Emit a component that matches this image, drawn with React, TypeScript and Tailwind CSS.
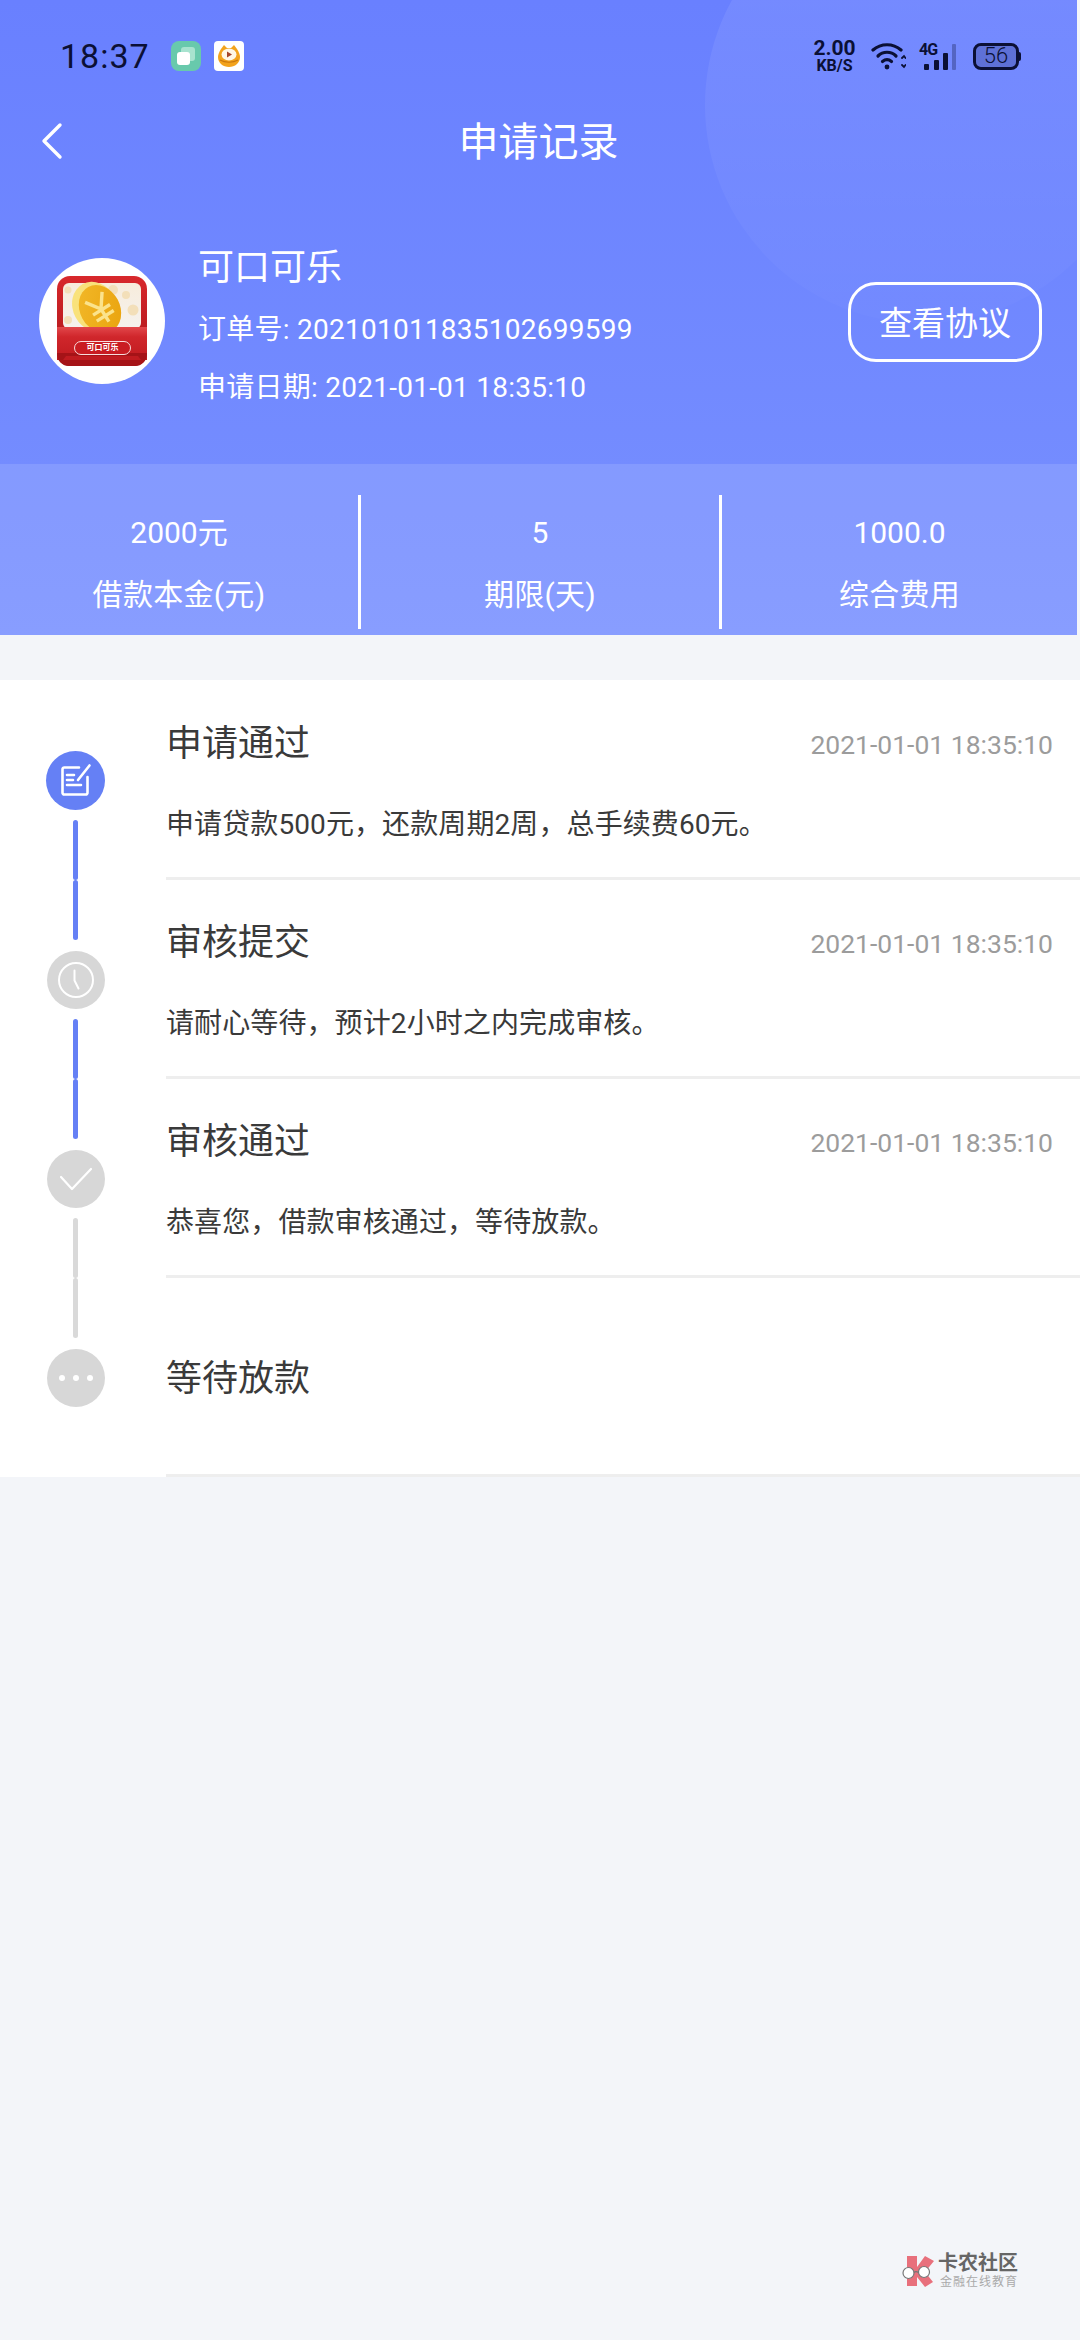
import React from "react";

const orderNumber = "202101011835102699599";

const rows = [
  { title: "申请通过", time: "2021-01-01 18:35:10", desc: "申请贷款500元，还款周期2周，总手续费60元。" },
  { title: "审核提交", time: "2021-01-01 18:35:10", desc: "请耐心等待，预计2小时之内完成审核。" },
  { title: "审核通过", time: "2021-01-01 18:35:10", desc: "恭喜您，借款审核通过，等待放款。" },
  { title: "等待放款", time: "", desc: "" },
];

function StepIcon({ index }: { index: number }) {
  if (index === 0)
    return (
      <div className="flex h-[59px] w-[59px] items-center justify-center rounded-full bg-[#6580f5]">
        <svg width="34" height="34" viewBox="0 0 34 34" fill="none" stroke="#fff" strokeWidth="2.6" strokeLinecap="round" strokeLinejoin="round">
          <path d="M20 4.500H5.500A1.800 1.800 0 0 0 3.500 6.500v23a1.800 1.800 0 0 0 2 2h21a1.800 1.800 0 0 0 2-2V14" />
          <path d="M19 17 30.500 2.500" />
          <path d="M8 12h7M8 17h6M8 22h14" />
        </svg>
      </div>
    );
  if (index === 1)
    return (
      <div className="flex h-[58px] w-[58px] items-center justify-center rounded-full bg-[#d7d7d7]">
        <svg width="38" height="38" viewBox="0 0 38 38" fill="none" stroke="#fff" strokeWidth="2" strokeLinecap="round" strokeLinejoin="round">
          <circle cx="19" cy="19" r="17" />
          <path d="M17.500 9.500v10l4 8" />
        </svg>
      </div>
    );
  if (index === 2)
    return (
      <div className="flex h-[58px] w-[58px] items-center justify-center rounded-full bg-[#d7d7d7]">
        <svg width="34" height="26" viewBox="0 0 34 26" fill="none" stroke="#fff" strokeWidth="2.2" strokeLinecap="round" strokeLinejoin="round">
          <path d="M2 11 13 23 32 3" />
        </svg>
      </div>
    );
  return (
    <div className="flex h-[58px] w-[58px] items-center justify-center gap-[8px] rounded-full bg-[#d7d7d7]">
      <span className="h-[6px] w-[6px] rounded-full bg-white" />
      <span className="h-[6px] w-[6px] rounded-full bg-white" />
      <span className="h-[6px] w-[6px] rounded-full bg-white" />
    </div>
  );
}

function Segment({ color }: { color: string }) {
  return <div className={`h-[60px] w-[5px] shrink-0 rounded-full ${color}`} />;
}

function AppIcon() {
  return (
    <div className="relative h-[90px] w-[90px]">
      <svg width="90" height="90" viewBox="0 0 90 90">
        <defs>
          <linearGradient id="redg" x1="0" y1="0" x2="0" y2="1">
            <stop offset="0" stopColor="#d8282c" />
            <stop offset="1" stopColor="#a81418" />
          </linearGradient>
          <linearGradient id="pocket" x1="0" y1="0" x2="0" y2="1">
            <stop offset="0" stopColor="#e2474b" />
            <stop offset="0.3" stopColor="#d0262b" />
            <stop offset="1" stopColor="#c01b20" />
          </linearGradient>
          <linearGradient id="coin" x1="0" y1="0" x2="1" y2="1">
            <stop offset="0" stopColor="#f2b92a" />
            <stop offset="1" stopColor="#e9a20c" />
          </linearGradient>
          <linearGradient id="panel" x1="0" y1="0" x2="0" y2="1">
            <stop offset="0" stopColor="#f7ecdc" />
            <stop offset="1" stopColor="#f5f2ee" />
          </linearGradient>
        </defs>
        <rect x="0" y="0" width="90" height="90" rx="13" fill="url(#redg)" />
        <rect x="6" y="7" width="78" height="46" rx="6" fill="url(#panel)" />
        <circle cx="56" cy="14" r="5" fill="#f3dfb9" />
        <circle cx="76" cy="34" r="5.500" fill="#f3dfb9" />
        <circle cx="11" cy="44" r="4" fill="#f3dfb9" />
        <circle cx="69" cy="19" r="4" fill="#f3dfb9" />
        <circle cx="11" cy="14" r="3.500" fill="#f3dfb9" />
        <ellipse cx="38" cy="31" rx="22" ry="26" fill="#f9e27b" transform="rotate(-28 38 31)" />
        <ellipse cx="43" cy="33" rx="20" ry="25" fill="url(#coin)" transform="rotate(-28 43 33)" />
        <g transform="translate(44 33) rotate(-32)" fill="none" stroke="#fbe38c" strokeWidth="3.400">
          <path d="M-10 -14 0 0 10 -14M0 0v15M-10 1h20M-10 8h20" />
        </g>
        <rect x="0" y="51" width="90" height="33" fill="url(#pocket)" />
        <path d="M0 78v-1h90v1a12 12 0 0 1-12 12H12A12 12 0 0 1 0 78Z" fill="#a51317" />
        <path d="M6 84h78l-3-4H9Z" fill="#c01b20" />
      </svg>
      <div className="absolute left-[17px] top-[65px] flex h-[14px] w-[57px] items-center justify-center rounded-full border border-[#f8dcdc] bg-[#c91c22] text-[8px] font-bold leading-none text-white">
        可口可乐
      </div>
    </div>
  );
}

function StatusBar() {
  return (
    <div className="flex h-[112px] items-center pl-[60px] pr-[56px] text-[#0b1035]">
      <span className="text-[34px] leading-none tracking-[1px]">18:37</span>
      <div className="ml-[21px] flex h-[30px] w-[30px] items-center justify-center rounded-[8px] bg-[#68c9ac]">
        <svg width="24" height="24" viewBox="0 0 24 24">
          <rect x="7" y="3" width="14" height="14" rx="3" fill="#a8e3cf" />
          <rect x="3" y="8" width="13" height="13" rx="3" fill="#fff" />
        </svg>
      </div>
      <div className="ml-[13px] flex h-[30px] w-[30px] items-center justify-center rounded-[4px] bg-white">
        <svg width="26" height="26" viewBox="0 0 26 26">
          <path d="M5 6 8 2l3 3h4l3-3 3 4c2 3 3 6 3 8 0 6-5 10-11 10S2 20 2 14c0-2 1-5 3-8Z" fill="#f3a31c" />
          <ellipse cx="13" cy="11.500" rx="7.500" ry="6" fill="#fff7e6" />
          <path d="M11 8.500v6l5-3Z" fill="#a6452a" />
          <path d="M4 17c5 3 13 3 18 0" fill="none" stroke="#c9780f" strokeWidth="1.2" />
        </svg>
      </div>
      <div className="ml-auto flex w-[45px] flex-col items-center font-bold leading-none">
        <span className="text-[21px] leading-[19px]">2.00</span>
        <span className="text-[16px] leading-[15px]">KB/S</span>
      </div>
      <svg className="ml-[14px]" width="35" height="28" viewBox="0 0 35 28" fill="none" stroke="#0b1035" strokeWidth="3.2" strokeLinecap="round">
        <path d="M2 8C10 1 22 1 30 8" />
        <path d="M7 14c5-5 13-5 18 0" />
        <path d="M11.500 19.500c3-2.500 6-2.500 9 0" />
        <circle cx="16" cy="25" r="2.400" fill="#0b1035" stroke="none" />
        <path d="M31 16l2-2 1.500 2M31 23l2 2 1.500-2" strokeWidth="1.8" />
      </svg>
      <div className="relative ml-[13px] h-[28px] w-[38px]">
        <span className="absolute left-0 top-0 text-[16px] font-bold leading-[16px] tracking-[-1px]">4G</span>
        <span className="absolute bottom-0 left-[5px] h-[6px] w-[5px] rounded-[1px] bg-[#0b1035]" />
        <span className="absolute bottom-0 left-[15px] h-[10px] w-[5px] rounded-[1px] bg-[#0b1035]" />
        <span className="absolute bottom-0 left-[24px] h-[17px] w-[5px] rounded-[1px] bg-[#0b1035]" />
        <span className="absolute bottom-0 left-[33px] h-[26px] w-[4px] rounded-[1px] bg-[#0b1035]/30" />
      </div>
      <div className="ml-[16px] flex items-center">
        <div className="flex h-[27px] w-[46px] items-center justify-center overflow-hidden rounded-[8px] border-[3px] border-[#0b1035]">
          <div className="flex h-full w-full items-center justify-center bg-[#0b1035]/20 text-[22px] font-light leading-none">56</div>
        </div>
        <div className="h-[9px] w-[2px] rounded-r-sm bg-[#0b1035]" />
      </div>
    </div>
  );
}

export default function App() {
  return (
    <div className="flex min-h-[2340px] w-[1080px] flex-col bg-[#f3f5f9] [font-family:Roboto,'Noto_Sans_CJK_SC',sans-serif]">
      <div className="relative h-[635px] w-[1077px] overflow-hidden bg-gradient-to-b from-[#6980ff] to-[#7890ff] text-white">
        <div className="absolute left-[705px] top-[-113px] h-[436px] w-[436px] rounded-full bg-gradient-to-b from-white/[0.1] to-white/[0.015]" />
        <div className="relative">
          <StatusBar />
          <div className="relative flex h-[62px] items-center justify-center">
            <svg className="absolute left-[40px] top-[10px]" width="24" height="38" viewBox="0 0 24 38" fill="none" stroke="#fff" strokeWidth="3.4" strokeLinecap="round" strokeLinejoin="round">
              <path d="M20 3 4 19l16 16" />
            </svg>
            <span className="text-[40px] leading-none">申请记录</span>
          </div>
          <div className="flex items-start pl-[39px] pr-[35px] pt-[64px]">
            <div className="mt-[20px] flex h-[126px] w-[126px] shrink-0 items-center justify-center rounded-full bg-white">
              <AppIcon />
            </div>
            <div className="ml-[33px] flex flex-col pt-[5px]">
              <span className="text-[36px] leading-[50px]">可口可乐</span>
              <span className="mt-[17px] text-[28px] leading-[40px] tracking-[0.25px]">订单号: {orderNumber}</span>
              <span className="mt-[18px] text-[28px] leading-[40px] tracking-[0.25px]">申请日期: 2021-01-01 18:35:10</span>
            </div>
            <div className="ml-auto mt-[44px] flex h-[80px] w-[194px] items-center justify-center rounded-[28px] border-[3px] border-white pt-[3px] text-[33px]">
              查看协议
            </div>
          </div>
        </div>
        <div className="absolute inset-x-0 bottom-0 flex h-[171px] bg-white/[0.12] pt-[31px] pb-[6px]">
          {[
            ["2000元", "借款本金(元)"],
            ["5", "期限(天)"],
            ["1000.0", "综合费用"],
          ].map(([a, b], i) => (
            <div key={b} className={i < 2 ? "flex w-[361px] flex-col items-center border-r-[3px] border-white" : "flex flex-1 flex-col items-center"}>
              <span className="mt-[20px] text-[30px] leading-[36px]">{a}</span>
              <span className="mt-[24px] text-[30px] leading-[40px] tracking-[0.3px]">{b}</span>
            </div>
          ))}
        </div>
      </div>

      <div className="mt-[45px] flex flex-col bg-white">
        {rows.map((r, i) => (
          <div key={r.title} className="flex h-[199px]">
            <div className={`flex w-[166px] shrink-0 flex-col items-center pr-[15px] ${i === 0 ? "pt-[70px]" : "pt-[1px]"}`}>
              {i > 0 && <Segment color={i < 3 ? "bg-[#6580f5]" : "bg-[#d9d9d9]"} />}
              <div className={`flex h-[60px] w-[60px] shrink-0 items-center justify-center ${i === 0 ? "" : "mt-[10px]"}`}>
                <StepIcon index={i} />
              </div>
              {i < 3 && (
                <div className={i === 0 ? "mt-[10px]" : "mt-[9px]"}>
                  <Segment color={i < 2 ? "bg-[#6580f5]" : "bg-[#d9d9d9]"} />
                </div>
              )}
            </div>
            <div className="flex min-w-0 flex-1 translate-y-[1px] flex-col border-b-[3px] border-[#eeeeee] pr-[27px]">
              {r.desc ? (
                <>
                  <div className="flex h-[124px] items-start justify-between pt-[37px]">
                    <span className="text-[36px] leading-[52px] text-[#3a3a3a]">{r.title}</span>
                    <span className="mt-[11px] text-[26.5px] leading-[32px] text-[#9c9c9c]">{r.time}</span>
                  </div>
                  <div className="text-[28px] leading-[40px] tracking-[0.1px] text-[#3a3a3a]">{r.desc}</div>
                </>
              ) : (
                <div className="flex h-full items-center pt-[6px]">
                  <span className="text-[36px] leading-[52px] text-[#3a3a3a]">{r.title}</span>
                </div>
              )}
            </div>
          </div>
        ))}
        <div className="h-[1px]" />
      </div>

      <div className="mt-[775px] flex items-center justify-end pr-[63px]">
        <svg width="33" height="33" viewBox="0 0 33 33">
          <path d="M5 1h10v11L23 1l9 5-9 11 8 10-8 5-8-10v9H5Z" fill="#e8707c" />
          <circle cx="6.500" cy="18" r="5.500" fill="#fff" stroke="#777" strokeWidth="1.2" />
          <circle cx="22" cy="17" r="5.500" fill="#fff" stroke="#777" strokeWidth="1.2" />
          <path d="M12 17.500c1-1 3-1 4.500 0" fill="none" stroke="#777" strokeWidth="1.2" />
        </svg>
        <div className="ml-[3px] flex w-[79px] flex-col items-stretch">
          <span className="whitespace-nowrap text-[20px] font-bold leading-[22px] text-[#666]">卡农社区</span>
          <span className="whitespace-nowrap pl-[2px] text-[12px] leading-[16px] tracking-[1px] text-[#aaa]">金融在线教育</span>
        </div>
      </div>
    </div>
  );
}
